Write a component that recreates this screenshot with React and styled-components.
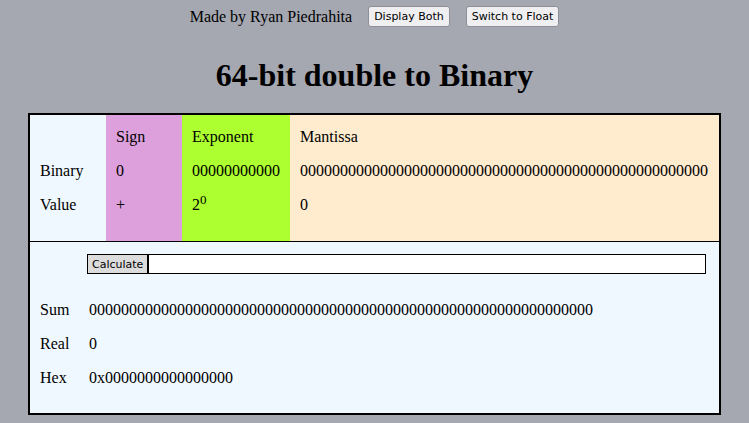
import React, { useState } from 'react';
import styled, { createGlobalStyle } from 'styled-components';

const GlobalStyle = createGlobalStyle`
  body {
    margin: 0;
    background: #a5a7b1;
    font-family: "Liberation Serif", "Times New Roman", serif;
    font-size: 16px;
    color: #000;
  }
`;

const Page = styled.div`
  display: flex;
  flex-direction: column;
  align-items: center;
`;

const TopBar = styled.div`
  display: flex;
  align-items: center;
  gap: 16px;
  margin-top: 6px;
  height: 21px;
`;

const TopButton = styled.button`
  font-family: "DejaVu Sans", Tahoma, sans-serif;
  font-size: 11px;
  height: 21px;
  padding: 0 5px;
  background: #efeff1;
  border: 1px solid #8f8f99;
  border-radius: 3px;
  color: #000;
  cursor: pointer;
`;

const Title = styled.h1`
  font-size: 32px;
  font-weight: bold;
  margin: 28px 0 0;
  line-height: 40px;
  height: 58px;
`;

const Panel = styled.div`
  width: 689px;
  border: 2px solid #000;
  background: #f0f8ff;
`;

const BitTable = styled.div`
  display: grid;
  grid-template-columns: 76px 76px 108px minmax(0, 1fr);
  border-bottom: 1px solid #000;
`;

const BitColumn = styled.div`
  background: ${p => p.$bg || 'transparent'};
  padding: 5px 10px 19px;
  display: flex;
  flex-direction: column;
  min-width: 0;
`;

const Cell = styled.div`
  height: 34px;
  display: flex;
  align-items: center;
  white-space: nowrap;
`;

const Sup = styled.sup`
  font-size: 13px;
  vertical-align: 6px;
  line-height: 0;
`;

const Results = styled.div`
  display: grid;
  grid-template-columns: 47px 1fr;
  padding: 12px 13px 18px 10px;
`;

const InputRow = styled.div`
  grid-column: 2;
  display: flex;
  height: 20px;
  margin-bottom: 19px;
`;

const CalcButton = styled.button`
  font-family: "DejaVu Sans", Tahoma, sans-serif;
  font-size: 11px;
  background: #dcdcdc;
  border: 1px solid #000;
  border-right-width: 2px;
  padding: 0 4px;
  height: 20px;
  color: #000;
`;

const NumInput = styled.input`
  flex: 1;
  height: 20px;
  box-sizing: border-box;
  border: 1px solid #000;
  border-left: none;
  background: #fff;
  outline: none;
  font-family: "Liberation Serif", serif;
`;

const Label = styled.div`
  height: 34px;
  display: flex;
  align-items: center;
`;

const Value = styled(Label)`
  padding-left: 2px;
  white-space: nowrap;
`;

const columns = [
  { key: 'label', bg: null, cells: ['', 'Binary', 'Value'] },
  { key: 'sign', bg: '#dda0dd', cells: ['Sign', '0', '+'] },
  { key: 'exp', bg: '#adff2f', cells: ['Exponent', '00000000000', 'exp'] },
  { key: 'man', bg: '#ffebcd', cells: ['Mantissa', '0'.repeat(51), '0'] },
];

export default function App() {
  const [num, setNum] = useState('');

  return (
    <Page>
      <GlobalStyle />
      <TopBar>
        <span>Made by Ryan Piedrahita</span>
        <TopButton>Display Both</TopButton>
        <TopButton>Switch to Float</TopButton>
      </TopBar>
      <Title>64-bit double to Binary</Title>
      <Panel>
        <BitTable>
          {columns.map(col => (
            <BitColumn key={col.key} $bg={col.bg}>
              {col.cells.map((c, i) => (
                <Cell key={i}>
                  {c === 'exp' ? (<span>2<Sup>0</Sup></span>) : c}
                </Cell>
              ))}
            </BitColumn>
          ))}
        </BitTable>
        <Results>
          <InputRow>
            <CalcButton>Calculate</CalcButton>
            <NumInput value={num} onChange={e => setNum(e.target.value)} />
          </InputRow>
          <Label>Sum</Label>
          <Value>{'0'.repeat(63)}</Value>
          <Label>Real</Label>
          <Value>0</Value>
          <Label>Hex</Label>
          <Value>0x0000000000000000</Value>
        </Results>
      </Panel>
    </Page>
  );
}
